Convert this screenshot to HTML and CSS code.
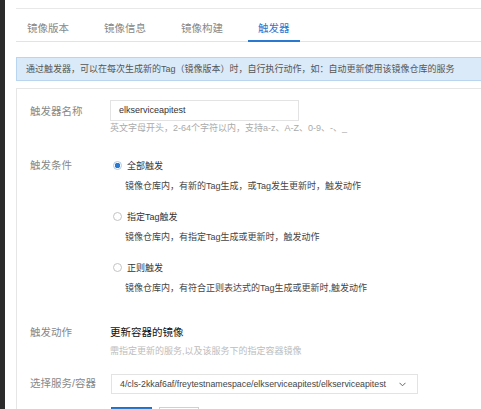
FILE: index.html
```html
<!DOCTYPE html>
<html>
<head>
  <meta charset="utf-8">
  <link rel="stylesheet" href="styles.css">
</head>
<body>
  <div class="page">
    <div class="sidebar"></div>
    <div class="main">
      <div class="tabs">
        <div class="tab">镜像版本</div>
        <div class="tab">镜像信息</div>
        <div class="tab">镜像构建</div>
        <div class="tab active">触发器</div>
      </div>

      <div class="notice">通过触发器，可以在每次生成新的Tag（镜像版本）时，自行执行动作，如：自动更新使用该镜像仓库的服务</div>

      <div class="card">
        <div class="row row-name">
          <div class="label">触发器名称</div>
          <div class="control">
            <div class="input">elkserviceapitest</div>
            <div class="hint">英文字母开头，2-64个字符以内，支持a-z、A-Z、0-9、-、_</div>
          </div>
        </div>

        <div class="row row-cond">
          <div class="label">触发条件</div>
          <div class="control">
            <div class="option">
              <div class="radio-line"><span class="radio checked"></span>全部触发</div>
              <div class="desc">镜像仓库内，有新的Tag生成，或Tag发生更新时，触发动作</div>
            </div>
            <div class="option">
              <div class="radio-line"><span class="radio"></span>指定Tag触发</div>
              <div class="desc">镜像仓库内，有指定Tag生成或更新时，触发动作</div>
            </div>
            <div class="option">
              <div class="radio-line"><span class="radio"></span>正则触发</div>
              <div class="desc">镜像仓库内，有符合正则表达式的Tag生成或更新时,触发动作</div>
            </div>
          </div>
        </div>

        <div class="row row-action">
          <div class="label">触发动作</div>
          <div class="control">
            <div class="action-title">更新容器的镜像</div>
            <div class="hint light">需指定更新的服务,以及该服务下的指定容器镜像</div>
          </div>
        </div>

        <div class="row row-select">
          <div class="label">选择服务/容器</div>
          <div class="control">
            <div class="select">
              <span>4/cls-2kkaf6af/freytestnamespace/elkserviceapitest/elkserviceapitest</span>
              <svg class="chevron" width="7" height="5" viewBox="0 0 7 5"><polyline points="0.5,0.8 3.5,3.8 6.5,0.8" fill="none" stroke="#666" stroke-width="1"/></svg>
            </div>
          </div>
        </div>

        <!-- only the top edge of the buttons is in frame -->
        <div class="buttons">
          <button class="btn primary" aria-label="确定"></button>
          <button class="btn" aria-label="取消"></button>
        </div>
      </div>
    </div>
  </div>
</body>
</html>
```

FILE: styles.css
```css
body {
  margin: 0;
  background: #ffffff;
  font-family: "Liberation Sans", "Noto Sans CJK SC", sans-serif;
  overflow: hidden;
}

.page {
  display: flex;
  height: 409px;
}

.sidebar {
  width: 5px;
  flex: none;
  background: #2b2b2b;
}

.main {
  flex: 1;
  min-width: 0;
  padding: 8px 0 0 11px;
}

/* tab bar */
.tabs {
  display: flex;
  gap: 15px;
  height: 32px;
  padding-left: 1px;
  margin-right: -2px;
  border-top: 1px solid #e8e8e8;
  border-bottom: 1px solid #e3e3e3;
}

.tab {
  box-sizing: border-box;
  height: 33px;
  padding: 12px 10px 0;
  font-size: 10.5px;
  line-height: 14px;
  color: #888888;
}

.tab.active {
  color: #2a79d0;
  border-bottom: 2px solid #2a79d0;
}

/* info strip */
.notice {
  box-sizing: border-box;
  height: 24px;
  margin: 15px -2px 0 0;
  padding-left: 9px;
  border: 1px solid #b9d5f0;
  background: #dbeaf8;
  font-size: 9px;
  line-height: 22px;
  color: #555555;
}

/* form */
.card {
  margin: 7px -2px 0 0;
  padding: 11px 0 40px 13px;
  border: 1px solid #e6e6e6;
}

.row {
  display: flex;
}

.label {
  width: 80px;
  flex: none;
  font-size: 10.5px;
  line-height: 14px;
  color: #888888;
}

.control {
  flex: 1;
  min-width: 0;
}

.row-name .label {
  padding-top: 3.5px;
}

.input {
  box-sizing: border-box;
  width: 189px;
  height: 21px;
  padding-left: 8px;
  border: 1px solid #e3e3e3;
  font-size: 9px;
  line-height: 19px;
  color: #333333;
}

.hint {
  margin-top: 1px;
  font-size: 9px;
  line-height: 12px;
  color: #aaaaaa;
}

.hint.light {
  margin-top: 6px;
  color: #bdbdbd;
}

.row-cond {
  margin-top: 24px;
}

.option + .option {
  margin-top: 17px;
}

.radio-line {
  display: flex;
  align-items: center;
  height: 14px;
  font-size: 9px;
  color: #333333;
}

.radio {
  box-sizing: border-box;
  width: 9px;
  height: 9px;
  margin: 0 5px 0 3px;
  border: 1px solid #c4c4c4;
  border-radius: 50%;
  background: #ffffff;
}

.radio.checked {
  border-color: #a9c9ec;
  background: radial-gradient(circle, #2a79d0 0 2.5px, #ffffff 3px);
}

.desc {
  margin-top: 8px;
  padding-left: 15px;
  font-size: 9px;
  line-height: 12px;
  color: #444444;
}

.row-action {
  margin-top: 31px;
}

.action-title {
  font-size: 10.5px;
  line-height: 14px;
  color: #111111;
}

.row-select {
  margin-top: 17px;
}

.row-select .label {
  padding-top: 2px;
}

.select {
  box-sizing: border-box;
  display: flex;
  align-items: center;
  justify-content: space-between;
  width: 307px;
  height: 20px;
  margin-left: 1px;
  padding: 0 11px 0 8px;
  border: 1px solid #e3e3e3;
  font-size: 8.8px;
  color: #444444;
}

.buttons {
  display: flex;
  gap: 7px;
  margin: 13px 0 0 81px;
}

.btn {
  box-sizing: border-box;
  width: 40px;
  height: 22px;
  border: 1px solid #d0d0d0;
  background: #ffffff;
}

.btn.primary {
  width: 41px;
  border-color: #1f6fce;
  background: #2a79d0;
}
```
